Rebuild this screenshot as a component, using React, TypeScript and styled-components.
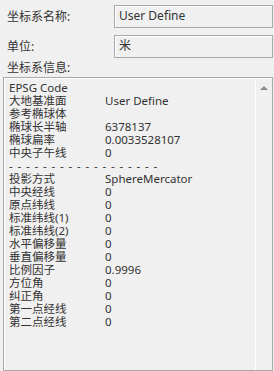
import React from 'react'
import styled, { createGlobalStyle } from 'styled-components'

const GlobalStyle = createGlobalStyle`
  html, body {
    margin: 0;
    padding: 0;
    background: #f0f0f0;
    overflow: hidden;
  }
  body {
    font-family: 'Noto Sans', 'Noto Sans CJK SC', sans-serif;
    font-size: 12px;
    color: #333;
  }
`

type Row = { key: string; value?: string }

const geoRows: Row[] = [
  { key: 'EPSG Code' },
  { key: '大地基准面', value: 'User Define' },
  { key: '参考椭球体' },
  { key: '椭球长半轴', value: '6378137' },
  { key: '椭球扁率', value: '0.0033528107' },
  { key: '中央子午线', value: '0' },
]

const projRows: Row[] = [
  { key: '投影方式', value: 'SphereMercator' },
  { key: '中央经线', value: '0' },
  { key: '原点纬线', value: '0' },
  { key: '标准纬线(1)', value: '0' },
  { key: '标准纬线(2)', value: '0' },
  { key: '水平偏移量', value: '0' },
  { key: '垂直偏移量', value: '0' },
  { key: '比例因子', value: '0.9996' },
  { key: '方位角', value: '0' },
  { key: '纠正角', value: '0' },
  { key: '第一点经线', value: '0' },
  { key: '第二点经线', value: '0' },
]

const App: React.FC = () => {
  const renderRow = (row: Row) => (
    <InfoLine key={row.key}>
      <InfoKey>{row.key}</InfoKey>
      {row.value && <InfoValue>{row.value}</InfoValue>}
    </InfoLine>
  )

  return (
    <>
      <GlobalStyle />
      <Panel>
        <FieldRow>
          <Label>坐标系名称:</Label>
          <TextBox>User Define</TextBox>
        </FieldRow>
        <FieldRow>
          <Label>单位:</Label>
          <TextBox>米</TextBox>
        </FieldRow>
        <SectionLabel>坐标系信息:</SectionLabel>
        <InfoBox>
          <InfoList>
            {geoRows.map(renderRow)}
            <Divider>{'- '.repeat(18)}</Divider>
            {projRows.map(renderRow)}
          </InfoList>
          <ScrollBar>
            <UpArrow />
          </ScrollBar>
        </InfoBox>
      </Panel>
    </>
  )
}

const Panel = styled.div`
  display: flex;
  flex-direction: column;
  width: 274px;
  height: 371px;
  padding: 5px 1px 0 3px;
  box-sizing: border-box;
`
const FieldRow = styled.div`
  display: grid;
  grid-template-columns: 111px 159px;
  align-items: center;
  height: 23px;
  margin-bottom: 7px;
`
const Label = styled.div`
  padding-left: 4px;
  line-height: 16px;
`
const TextBox = styled.div`
  height: 23px;
  box-sizing: border-box;
  border: 1px solid #a9a9a9;
  box-shadow: inset 1px 1px 0 #fff;
  padding: 0 4px;
  line-height: 20px;
  color: #333;
`
const SectionLabel = styled(Label)`
  height: 16px;
  margin-top: -5px;
  margin-bottom: 1px;
`
const InfoBox = styled.div`
  display: flex;
  width: 270px;
  height: 300px;
  box-sizing: border-box;
  border: 1px solid #a9a9a9;
  box-shadow: inset 1px 1px 0 #fff;
`
const InfoList = styled.div`
  flex: 1;
  padding: 3px 0 0 5px;
  font-size: 11.5px;
`
const InfoLine = styled.div`
  display: flex;
  height: 13px;
  line-height: 13px;
  white-space: nowrap;
`
const InfoKey = styled.span`
  width: 96px;
`
const InfoValue = styled.span``
const Divider = styled.div`
  height: 13px;
  line-height: 13px;
  white-space: pre;
  letter-spacing: 0.9px;
`
const ScrollBar = styled.div`
  width: 16px;
  border-left: 1px solid #fff;
  display: flex;
  justify-content: center;
  padding-top: 8px;
`
const UpArrow = styled.div`
  width: 0;
  height: 0;
  border-left: 4px solid transparent;
  border-right: 4px solid transparent;
  border-bottom: 4px solid #8a8a8a;
`

export default App
